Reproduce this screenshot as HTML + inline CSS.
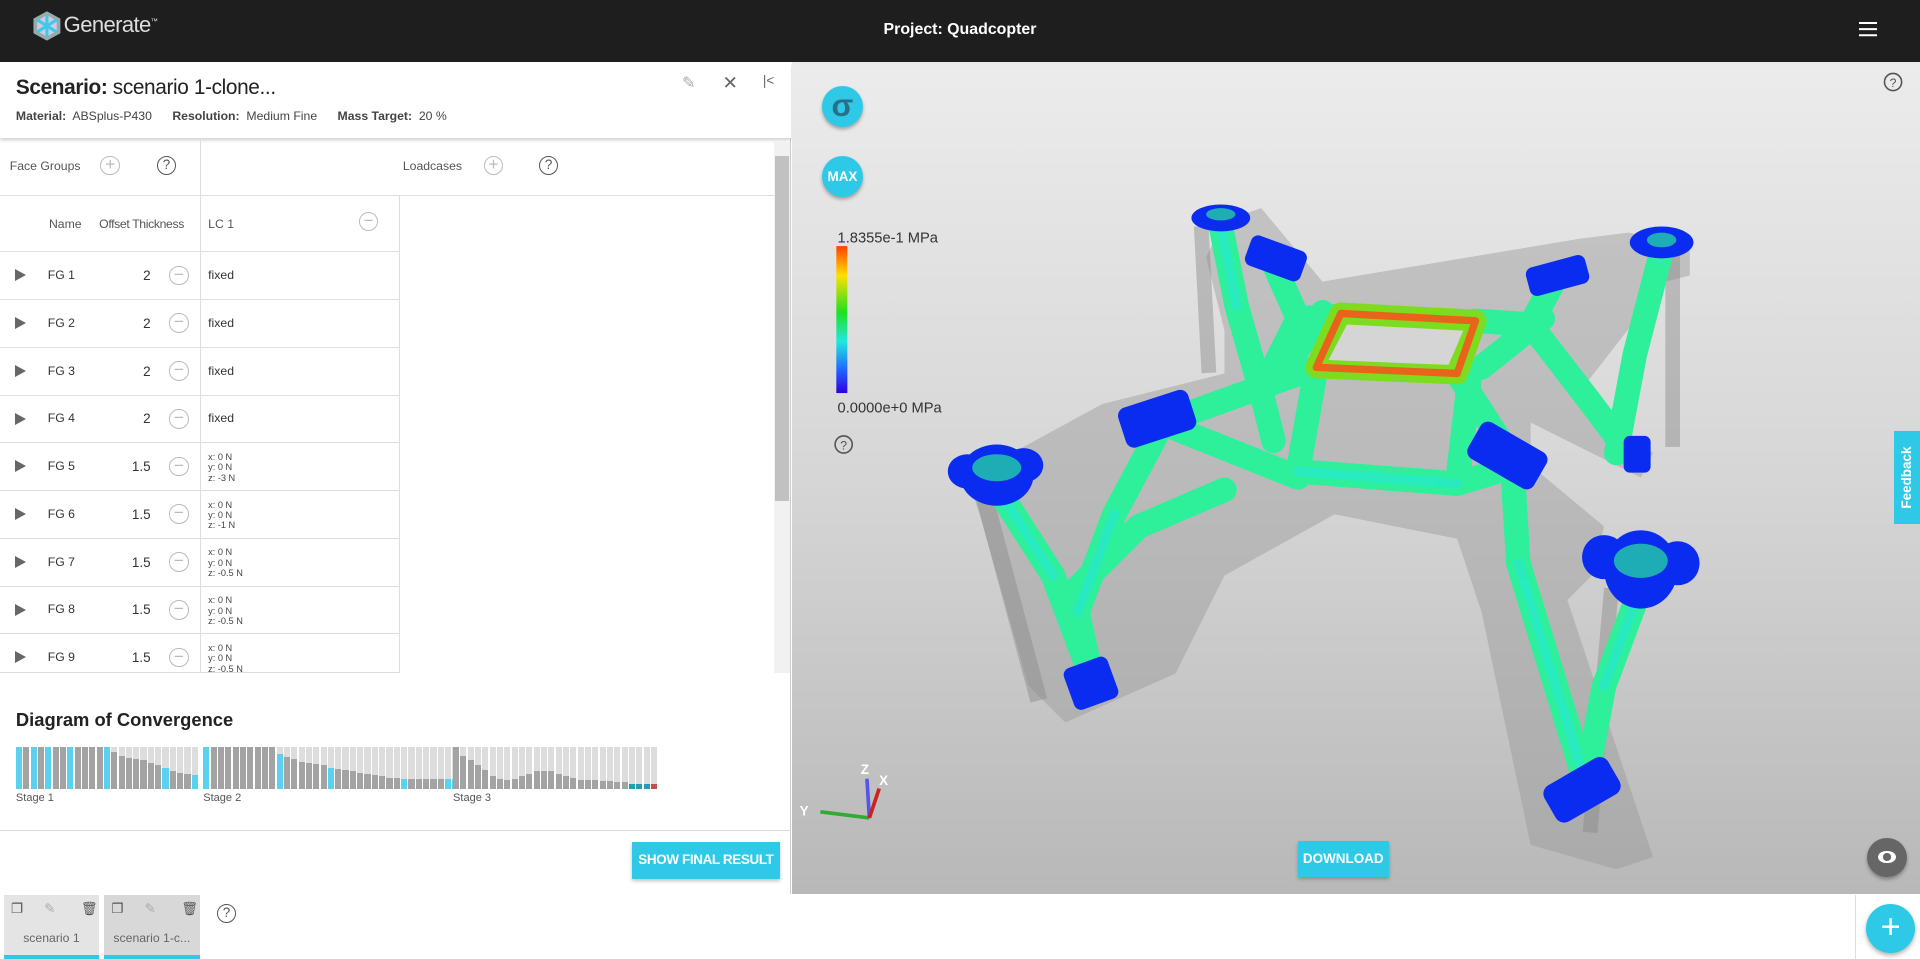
<!DOCTYPE html>
<html><head><meta charset="utf-8"><style>
*{box-sizing:border-box;margin:0;padding:0}
html,body{width:1920px;height:959px;overflow:hidden;background:#fff}
#w{position:absolute;left:0;top:0;width:1568px;height:783px;zoom:1.22449;font-family:"Liberation Sans",sans-serif;color:#333}
.a{position:absolute}
.hdr{left:0;top:0;width:1568px;height:51px;background:#1e1e1e}
.circ{border:1.5px solid #bbb;border-radius:50%;width:16px;height:16px;color:#bbb;font-size:14px;line-height:12px;text-align:center}
.q{border:1.5px solid #555;border-radius:50%;width:16px;height:16px;font-size:11px;text-align:center;line-height:13px;color:#555}
.row{left:0;width:326px;height:39px;border-bottom:1px solid #ddd}
.tri{width:0;height:0;border-left:9px solid #666;border-top:5.5px solid transparent;border-bottom:5.5px solid transparent}
.t11{font-size:10px}
.sm{font-size:7.5px;line-height:8.5px;color:#444}
.bars{display:flex;gap:1px;height:34px;align-items:flex-end}
.bars div{width:5px;height:34px;background:#ddd;position:relative}
.bars div i{position:absolute;left:0;bottom:0;width:5px;background:#a3a3a3}
</style></head><body><div id="w">
<div class="a hdr"></div>
<svg class="a" style="left:25px;top:8px" width="26" height="26" viewBox="0 0 26 26"><polygon points="13,1 24,7 24,19 13,25 2,19 2,7" fill="#9aa"/><polygon points="13,4 21,9 21,17 13,22 5,17 5,9" fill="#ccd"/><g stroke="#3cc8ef" stroke-width="2.5"><line x1="13" y1="4" x2="13" y2="22"/><line x1="5" y1="8" x2="21" y2="18"/><line x1="5" y1="18" x2="21" y2="8"/></g></svg>
<div class="a" style="left:52px;top:10px;color:#ddd;font-size:18px;letter-spacing:-.5px">Generate<sup style="font-size:6px">™</sup></div>
<div class="a" style="left:0;width:1568px;top:17px;text-align:center;color:#fff;font-size:13px;font-weight:bold">Project: Quadcopter</div>
<div class="a" style="left:1518px;top:18px;width:15px;height:2px;background:#fff;box-shadow:0 5px 0 #fff,0 10px 0 #fff"></div>

<div class="a" style="left:0;top:51px;width:646px;height:679px;background:#fff;border-right:1px solid #ccc"></div>
<div class="a" style="left:0;top:51px;width:646px;height:62px;box-shadow:0 2px 3px rgba(0,0,0,.2);background:#fff"></div>
<div class="a" style="left:13px;top:62px;font-size:17px;color:#222;letter-spacing:-.3px"><b>Scenario:</b> scenario 1-clone...</div>
<div class="a t11" style="left:13px;top:89px;color:#444"><b>Material:</b>&nbsp; ABSplus-P430 &nbsp;&nbsp;&nbsp;&nbsp; <b>Resolution:</b>&nbsp; Medium Fine &nbsp;&nbsp;&nbsp;&nbsp; <b>Mass Target:</b>&nbsp; 20 %</div>
<div class="a" style="left:557px;top:60px;color:#aaa;font-size:13px">✎</div>
<div class="a" style="left:590px;top:59px;color:#666;font-size:15px">✕</div>
<div class="a" style="left:623px;top:60px;color:#666;font-size:11px">|&lt;</div>

<div class="a" style="left:632px;top:115px;width:13px;height:435px;background:#f1f1f1"></div>
<div class="a" style="left:633px;top:127px;width:11px;height:282px;background:#c1c1c1"></div>
<div class="a" style="left:0;top:159px;width:632px;height:1px;background:#ddd"></div>
<div class="a" style="left:163px;top:113px;width:1px;height:437px;background:#ddd"></div>
<div class="a" style="left:326px;top:160px;width:1px;height:390px;background:#ddd"></div>
<div class="a t11" style="left:8px;top:130px;color:#555">Face Groups</div>
<div class="a circ" style="left:82px;top:127px">+</div>
<div class="a q" style="left:128px;top:127px">?</div>
<div class="a t11" style="left:329px;top:130px;color:#555">Loadcases</div>
<div class="a circ" style="left:395px;top:127px">+</div>
<div class="a q" style="left:440px;top:127px">?</div>
<div class="a t11" style="left:40px;top:177px;color:#555">Name</div>
<div class="a t11" style="left:81px;top:177px;color:#555;letter-spacing:-.3px">Offset Thickness</div>
<div class="a t11" style="left:170px;top:177px;color:#555">LC 1</div>
<div class="a circ" style="left:293px;top:173px">−</div>
<div class="a" style="left:0;top:205px;width:326px;height:1px;background:#ddd"></div>
<div id="rows"></div>

<div class="a" style="left:13px;top:579px;font-size:15px;font-weight:bold;color:#222">Diagram of Convergence</div>
<div class="a bars" id="s1" style="left:13px;top:610px"></div>
<div class="a bars" id="s2" style="left:166px;top:610px"></div>
<div class="a bars" id="s3" style="left:370px;top:610px"></div>
<div class="a" style="left:13px;top:647px;font-size:9px;color:#555">Stage 1</div>
<div class="a" style="left:166px;top:647px;font-size:9px;color:#555">Stage 2</div>
<div class="a" style="left:370px;top:647px;font-size:9px;color:#555">Stage 3</div>
<div class="a" style="left:0;top:678px;width:646px;height:1px;background:#ddd"></div>
<div class="a" style="left:516px;top:688px;width:121px;height:30px;background:#2fc9e8;color:#fff;font-size:11px;font-weight:bold;text-align:center;line-height:30px;white-space:nowrap;letter-spacing:-.3px;box-shadow:0 2px 3px rgba(0,0,0,.25)">SHOW FINAL RESULT</div>

<div class="a" style="left:647px;top:51px;width:921px;height:679px;background:linear-gradient(#ececec,#d6d6d6 50%,#b8b8b8)"></div>
<svg class="a" style="left:0;top:0" width="1568" height="783" viewBox="0 0 1568 783">
<g fill="#9a9a9a" opacity=".45">
<polygon points="1000,180 1030,170 1080,230 1290,195 1330,190 1380,200 1380,225 1360,230 1290,320 1350,370 1340,390 1250,345 1250,380 1310,430 1300,470 1280,490 1350,700 1320,710 1250,690 1210,500 1190,440 1090,420 1000,470 960,550 870,590 840,560 800,420 790,390 900,330 1000,305 1000,270 985,210"/>
</g>
<g fill="#888" opacity=".45"><rect x="975" y="185" width="12" height="120" transform="rotate(-3 975 185)"/><rect x="1360" y="205" width="12" height="160"/><rect x="795" y="400" width="14" height="180" transform="rotate(-15 795 400)"/><rect x="1310" y="480" width="12" height="200" transform="rotate(5 1310 480)"/></g>
<g fill="none" stroke-linecap="round" stroke-linejoin="round">
<g stroke="#2ef09a" stroke-width="20">
<path d="M997,185 L1010,250 L1030,320"/><path d="M1040,215 L1060,260 L1095,258"/>
<path d="M1357,205 L1335,290 L1320,370"/><path d="M1270,228 L1250,265 L1205,262"/>
<path d="M812,395 L860,470 L892,555"/><path d="M950,345 L910,420 L880,500 L892,555"/>
<path d="M1340,480 L1310,560 L1295,640"/><path d="M1235,380 L1240,460 L1295,640"/>
<path d="M950,345 L1075,300"/><path d="M1235,375 L1190,305"/>
<path d="M1075,300 L1060,385 L1190,395 L1200,310"/>
<path d="M960,350 L1060,390"/><path d="M1190,395 L1240,380"/>
<path d="M1060,260 L1030,320 L1040,360"/><path d="M1250,265 L1300,330 L1330,370"/>
<path d="M880,480 L930,430 L1000,400"/><path d="M1210,300 L1260,260"/><path d="M1050,300 L1080,255"/>
</g>
<g stroke="#28e8d0" stroke-width="8" opacity=".7">
<path d="M997,185 L1010,250"/><path d="M812,395 L860,470"/><path d="M1340,480 L1310,560"/><path d="M910,420 L880,500"/><path d="M1240,460 L1295,640"/><path d="M1060,385 L1190,395"/>
</g>
<polygon points="1095,256 1205,262 1190,305 1075,300" fill="#2ef09a" fill-opacity="0" stroke="#7edc20" stroke-width="18"/>
<polygon points="1095,256 1205,262 1190,305 1075,300" stroke="#e8641a" stroke-width="6"/>
<polygon points="1100,265 1195,270 1183,298 1085,294" fill="#d5d5d5" stroke="none"/>
</g>
<g fill="#0a2cf0">
<rect x="1018" y="198" width="48" height="26" rx="6" transform="rotate(20 1042 211)"/>
<rect x="1247" y="213" width="50" height="24" rx="6" transform="rotate(-15 1272 225)"/>
<rect x="915" y="325" width="60" height="34" rx="7" transform="rotate(-18 945 342)"/>
<rect x="1200" y="355" width="62" height="34" rx="7" transform="rotate(30 1231 372)"/>
<rect x="872" y="540" width="38" height="36" rx="6" transform="rotate(-20 891 558)"/>
<rect x="1262" y="628" width="60" height="34" rx="8" transform="rotate(-30 1292 645)"/>
<rect x="1326" y="356" width="22" height="30" rx="5"/>
<ellipse cx="997" cy="178" rx="24" ry="11"/><ellipse cx="1357" cy="198" rx="26" ry="13"/>
<ellipse cx="814" cy="388" rx="30" ry="25"/><ellipse cx="790" cy="385" rx="16" ry="14"/><ellipse cx="836" cy="380" rx="16" ry="14"/>
<ellipse cx="1340" cy="465" rx="30" ry="32"/><ellipse cx="1310" cy="455" rx="18" ry="18"/><ellipse cx="1370" cy="460" rx="18" ry="18"/>
</g>
<g fill="#26d8a0" opacity=".75"><ellipse cx="814" cy="382" rx="20" ry="11"/><ellipse cx="1340" cy="458" rx="22" ry="14"/><ellipse cx="997" cy="175" rx="12" ry="5"/><ellipse cx="1357" cy="196" rx="12" ry="6"/></g>
<defs><linearGradient id="lg" x1="0" y1="0" x2="0" y2="1"><stop offset="0" stop-color="#ff4000"/><stop offset=".2" stop-color="#ffe000"/><stop offset=".45" stop-color="#20e020"/><stop offset=".65" stop-color="#20e8e0"/><stop offset=".85" stop-color="#2060ff"/><stop offset="1" stop-color="#3000e0"/></linearGradient></defs>
<rect x="683" y="201" width="9" height="120" fill="url(#lg)"/>
<text x="684" y="198" font-family="Liberation Sans" font-size="12" fill="#333">1.8355e-1 MPa</text>
<text x="684" y="337" font-family="Liberation Sans" font-size="12" fill="#333">0.0000e+0 MPa</text>
<circle cx="689" cy="363" r="7" fill="none" stroke="#555" stroke-width="1.3"/><text x="689" y="367" font-size="10" text-anchor="middle" fill="#555" font-family="Liberation Sans">?</text>
<circle cx="1546" cy="67" r="7" fill="none" stroke="#555" stroke-width="1.3"/><text x="1546" y="71" font-size="10" text-anchor="middle" fill="#555" font-family="Liberation Sans">?</text>
<line x1="710" y1="668" x2="670" y2="663" stroke="#3a3" stroke-width="3"/><line x1="710" y1="668" x2="708" y2="636" stroke="#55e" stroke-width="3"/><line x1="710" y1="668" x2="718" y2="644" stroke="#c22" stroke-width="3"/>
<text x="653" y="666" font-size="11" font-weight="bold" fill="#fff" font-family="Liberation Sans">Y</text><text x="703" y="632" font-size="11" font-weight="bold" fill="#fff" font-family="Liberation Sans">Z</text><text x="718" y="641" font-size="11" font-weight="bold" fill="#fff" font-family="Liberation Sans">X</text>
</svg>
<div class="a" style="left:671px;top:70px;width:34px;height:34px;border-radius:50%;background:#2fc9e8;box-shadow:0 2px 3px rgba(0,0,0,.3);color:#2a6f8a;font-size:26px;font-weight:bold;text-align:center;line-height:32px">σ</div>
<div class="a" style="left:671px;top:127px;width:34px;height:34px;border-radius:50%;background:#2fc9e8;box-shadow:0 2px 3px rgba(0,0,0,.3);color:#fff;font-size:11px;font-weight:bold;text-align:center;line-height:34px">MAX</div>
<div class="a" style="left:1060px;top:687px;width:74px;height:29px;background:#2fc9e8;color:#fff;font-size:11px;font-weight:bold;text-align:center;line-height:29px;box-shadow:0 2px 3px rgba(0,0,0,.25)">DOWNLOAD</div>
<div class="a" style="left:1525px;top:684px;width:32px;height:32px;border-radius:50%;background:#666;box-shadow:0 2px 3px rgba(0,0,0,.3)"></div>
<div class="a" style="left:1534px;top:695px;width:14px;height:10px;border-radius:50%;background:#fff"></div>
<div class="a" style="left:1538px;top:697px;width:6px;height:6px;border-radius:50%;background:#666"></div>
<div class="a" style="left:1547px;top:352px;width:21px;height:76px;background:#2fc9e8"></div>
<div class="a" style="left:1520px;top:383px;width:76px;height:14px;transform:rotate(-90deg);color:#fff;font-size:11px;font-weight:bold;text-align:center">Feedback</div>

<div class="a" style="left:3px;top:731px;width:78px;height:52px;background:#e4e4e4;border-bottom:4px solid #2fc9e8"></div>
<div class="a" style="left:85px;top:731px;width:78px;height:52px;background:#d8d8d8;border-bottom:4px solid #2fc9e8"></div>
<div class="a" style="left:3px;top:736px;width:160px;font-size:11px;color:#555">
<span class="a" style="left:6px">❐</span><span class="a" style="left:33px;color:#aaa">✎</span><span class="a" style="left:63px">🗑</span>
<span class="a" style="left:88px">❐</span><span class="a" style="left:115px;color:#aaa">✎</span><span class="a" style="left:145px">🗑</span></div>
<div class="a" style="left:3px;top:760px;width:78px;text-align:center;font-size:10px;color:#666">scenario 1</div>
<div class="a" style="left:85px;top:760px;width:78px;text-align:center;font-size:10px;color:#666">scenario 1-c...</div>
<div class="a q" style="left:177px;top:738px">?</div>
<div class="a" style="left:1515px;top:731px;width:1px;height:52px;background:#ddd"></div>
<div class="a" style="left:1524px;top:738px;width:40px;height:40px;border-radius:50%;background:#2fc9e8;color:#fff;font-size:28px;text-align:center;line-height:38px;box-shadow:0 2px 4px rgba(0,0,0,.3)">+</div>
</div>
<script>
var rows=[["FG 1","2","fixed"],["FG 2","2","fixed"],["FG 3","2","fixed"],["FG 4","2","fixed"],["FG 5","1.5","x: 0 N|y: 0 N|z: -3 N"],["FG 6","1.5","x: 0 N|y: 0 N|z: -1 N"],["FG 7","1.5","x: 0 N|y: 0 N|z: -0.5 N"],["FG 8","1.5","x: 0 N|y: 0 N|z: -0.5 N"],["FG 9","1.5","x: 0 N|y: 0 N|z: -0.5 N"]];
var h="";rows.forEach(function(r,i){var y=206+i*39;var b=y+Math.min(39,550-y);
if(y>=550)return;
h+='<div class="a row" style="top:'+y+'px;height:'+(b-y)+'px"></div>';
h+='<div class="a tri" style="left:12px;top:'+(y+14)+'px"></div><div class="a t11" style="left:39px;top:'+(y+13)+'px">'+r[0]+'</div><div class="a" style="left:90px;width:33px;text-align:right;font-size:11px;top:'+(y+13)+'px">'+r[1]+'</div><div class="a circ" style="left:138px;top:'+(y+11)+'px">−</div>';
if(r[2].indexOf("|")<0)h+='<div class="a t11" style="left:170px;top:'+(y+13)+'px">'+r[2]+'</div>';
else h+='<div class="a sm" style="left:170px;top:'+(y+7)+'px">'+r[2].split("|").join("<br>")+'</div>';});
document.getElementById("rows").outerHTML=h;
function bars(id,d,c){var e=document.getElementById(id),s="";d.forEach(function(v,i){var col=c[i]||"#a3a3a3";s+='<div><i style="height:'+v+'px;background:'+col+'"></i></div>'});e.innerHTML=s;}
var C="#5ad2ef";
bars("s1",[34,34,34,34,34,34,34,34,34,34,34,34,34,30,27,25,24,23,21,19,17,14,13,12,11],{0:C,2:C,4:C,7:C,12:C,20:C,24:C});
bars("s2",[34,34,34,34,34,34,34,34,34,34,28,26,24,22,21,20,19,17,16,15,14,13,12,11,10,9,9,8,8,8,8,8,8,8,8],{0:C,10:C,17:C,27:C,33:C,34:C});
bars("s3",[34,27,23,19,15,10,8,7,8,10,12,14,14,14,12,10,9,7,7,7,6,6,5,5,4,4,4,4],{24:"#2a9ab0",25:"#2a9ab0",26:"#2a9ab0",27:"#c05050"});
</script>
</body></html>
